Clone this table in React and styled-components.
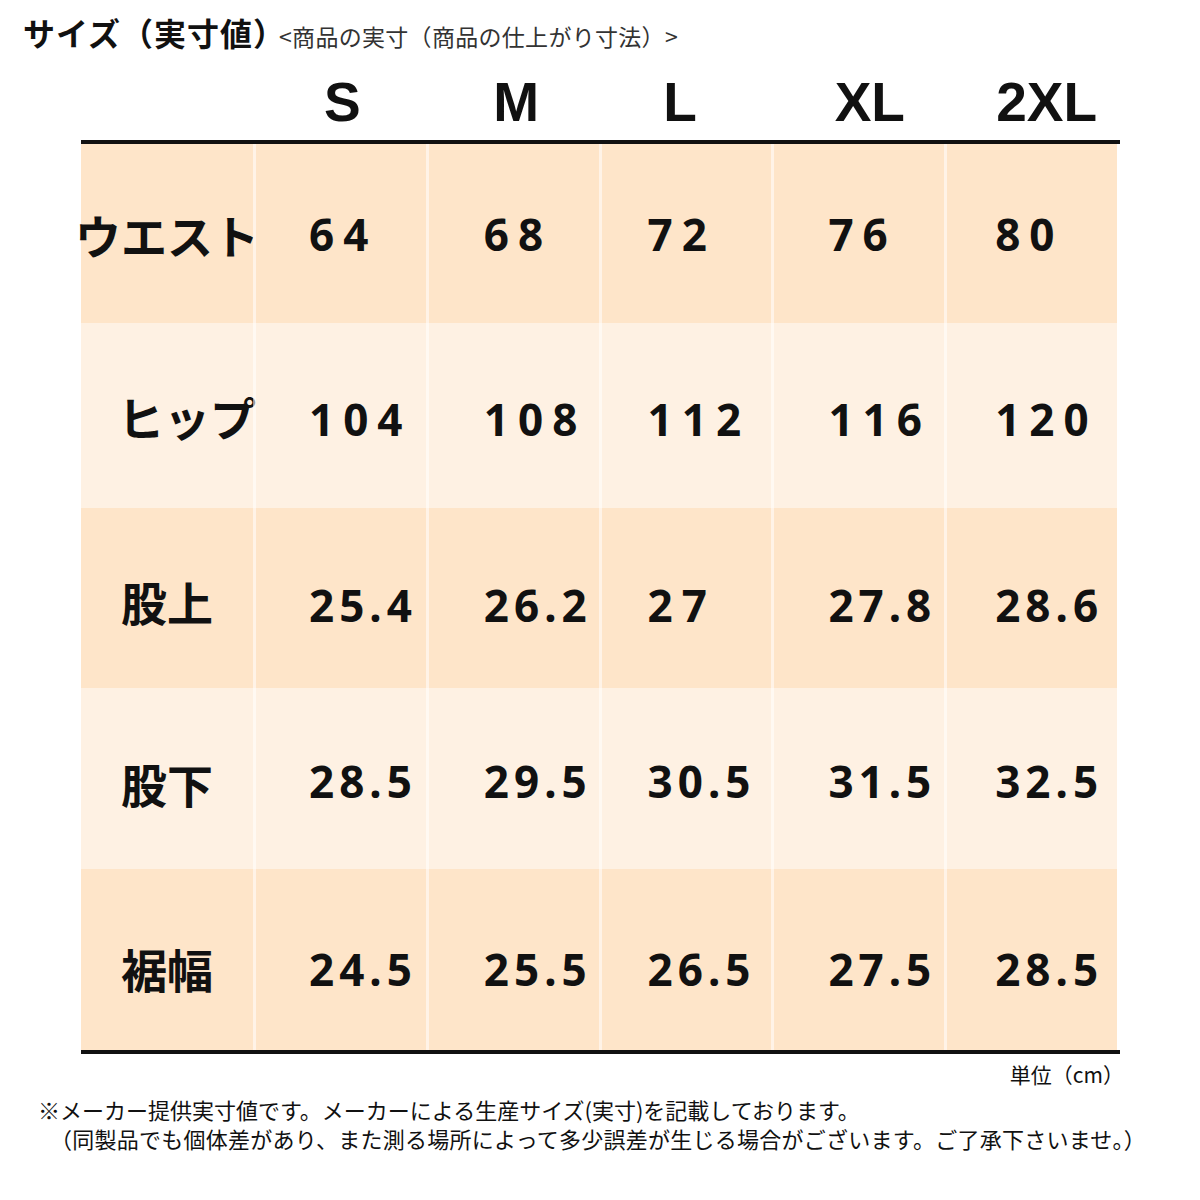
import React from "react";
import styled, { createGlobalStyle } from "styled-components";

const Global = createGlobalStyle`
  html, body { margin: 0; padding: 0; background: #fff; }
  body { font-family: "Noto Sans CJK JP", "Noto Sans", sans-serif; color: #111; }
`;

const Page = styled.div`
  width: 1200px;
  height: 1200px;
  box-sizing: border-box;
  padding: 10px 0 0 0;
  display: flex;
  flex-direction: column;
`;

const TitleBar = styled.div`
  display: flex;
  align-items: baseline;
  padding-left: 23px;
  height: 44px;
`;

const Title = styled.h1`
  margin: 0;
  font-family: "Noto Sans CJK JP", sans-serif;
  font-weight: 700;
  font-size: 32px;
  line-height: 44px;
  letter-spacing: 1px;
  color: #111;
`;

const Subtitle = styled.span`
  margin-left: -7px;
  font-family: "Noto Sans CJK JP", sans-serif;
  font-weight: 400;
  font-size: 23px;
  letter-spacing: 0.3px;
  color: #333;
`;

const Table = styled.div`
  margin-left: 81px;
  width: 1039px;
  display: flex;
  flex-direction: column;
`;

const Grid = styled.div`
  display: grid;
  grid-template-columns: 172px repeat(5, 1fr);
  width: 1036px;
`;

const HeadRow = styled(Grid)`
  height: 86px;
  align-items: center;
`;

const SizeHead = styled.div`
  font-family: "Liberation Sans", Arial, sans-serif;
  font-weight: 700;
  font-size: 55px;
  text-align: center;
  color: #111;
  padding-top: 10px;
  transform: translateX(${(p) => p.$shift || 0}px);
`;

const Rule = styled.div`
  height: 4px;
  width: 1039px;
  background: #111;
`;

const Row = styled(Grid)`
  height: ${(p) => p.$h}px;
  background: ${(p) => (p.$dark ? "#FEE5C9" : "#FEF1E3")};
`;

const LabelCell = styled.div`
  display: flex;
  align-items: center;
  justify-content: center;
  white-space: nowrap;
  font-family: "Noto Sans CJK JP", sans-serif;
  font-weight: 700;
  font-size: 46px;
  color: #111;
  padding-left: ${(p) => p.$shift || 0}px;
  padding-top: ${(p) => p.$top || 0}px;
`;

const ValueCell = styled.div`
  display: flex;
  align-items: center;
  border-left: 3px solid rgba(255, 255, 255, 0.55);
  padding-left: ${(p) => p.$pad}px;
  padding-top: ${(p) => p.$top || 0}px;
  font-family: "Noto Sans", "Open Sans", sans-serif;
  font-weight: 700;
  font-size: 44px;
  letter-spacing: ${(p) => (p.$decimal ? 5 : 9)}px;
  white-space: nowrap;
  color: #111;
`;

const Unit = styled.div`
  width: 1124px;
  text-align: right;
  font-family: "Noto Sans CJK JP", sans-serif;
  font-size: 21px;
  line-height: 26px;
  margin-top: 7px;
  color: #111;
`;

const Notes = styled.div`
  margin-top: 8px;
  padding-left: 38px;
  font-family: "Noto Sans CJK JP", sans-serif;
  font-size: 22px;
  line-height: 29px;
  color: #111;
`;

const NoteLine = styled.div`
  padding-left: ${(p) => p.$indent || 0}px;
  letter-spacing: ${(p) => p.$spacing || 0}px;
  white-space: nowrap;
`;

const sizes = [
  { name: "S", shift: 3 },
  { name: "M", shift: 4 },
  { name: "L", shift: -5 },
  { name: "XL", shift: 12 },
  { name: "2XL", shift: 16 },
];

const pads = [53, 55, 46, 54, 48];

const rows = [
  { label: "ウエスト", values: ["64", "68", "72", "76", "80"], h: 179, dark: true, top: 0 },
  { label: "ヒップ", values: ["104", "108", "112", "116", "120"], h: 185, dark: false, shift: 40, labelTop: -18, top: 6 },
  { label: "股上", values: ["25.4", "26.2", "27", "27.8", "28.6"], h: 180, dark: true, top: 14, labelTop: 6 },
  { label: "股下", values: ["28.5", "29.5", "30.5", "31.5", "32.5"], h: 181, dark: false, top: 4, labelTop: 8 },
  { label: "裾幅", values: ["24.5", "25.5", "26.5", "27.5", "28.5"], h: 181, dark: true, top: 18, labelTop: 16 },
];

export default function App() {
  return (
    <>
      <Global />
      <Page>
        <TitleBar>
          <Title>サイズ（実寸値）</Title>
          <Subtitle>&lt;商品の実寸（商品の仕上がり寸法）&gt;</Subtitle>
        </TitleBar>
        <Table>
          <HeadRow>
            <div />
            {sizes.map((s) => (
              <SizeHead key={s.name} $shift={s.shift}>
                {s.name}
              </SizeHead>
            ))}
          </HeadRow>
          <Rule />
          {rows.map((r) => (
            <Row key={r.label} $h={r.h} $dark={r.dark}>
              <LabelCell $shift={r.shift} $top={r.labelTop}>
                {r.label}
              </LabelCell>
              {r.values.map((v, i) => (
                <ValueCell key={i} $pad={pads[i]} $top={r.top} $decimal={v.includes(".")}>
                  {v}
                </ValueCell>
              ))}
            </Row>
          ))}
          <Rule />
        </Table>
        <Unit>単位（cm）</Unit>
        <Notes>
          <NoteLine>※メーカー提供実寸値です。メーカーによる生産サイズ(実寸)を記載しております。</NoteLine>
          <NoteLine $indent={12} $spacing={0.25}>
            （同製品でも個体差があり、また測る場所によって多少誤差が生じる場合がございます。ご了承下さいませ。）
          </NoteLine>
        </Notes>
      </Page>
    </>
  );
}
